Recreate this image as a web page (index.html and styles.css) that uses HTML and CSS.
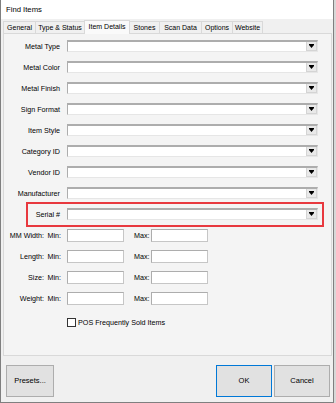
FILE: index.html
```html
<!DOCTYPE html>
<html lang="en">
<head>
  <meta charset="UTF-8" />
  <title>Find Items</title>
  <link rel="stylesheet" href="styles.css">
</head>
<body>
  <div class="window">
    <div class="titlebar">Find Items</div>
    <div class="tabs">
      <div class="tab t-general">General</div>
      <div class="tab t-type">Type &amp; Status</div>
      <div class="tab t-item active">Item Details</div>
      <div class="tab t-stones">Stones</div>
      <div class="tab t-scan">Scan Data</div>
      <div class="tab t-options">Options</div>
      <div class="tab t-web">Website</div>
    </div>
    <div class="panel">
      <div class="row">
        <div class="label">Metal Type</div>
        <div class="combo"><span class="drop"><svg viewBox="0 0 5 4" width="5" height="4"><rect x="0" y="0" width="5" height="1" fill="#000"/><polygon points="0,1 5,1 2.5,4" fill="#000"/></svg></span></div>
      </div>
      <div class="row">
        <div class="label">Metal Color</div>
        <div class="combo"><span class="drop"><svg viewBox="0 0 5 4" width="5" height="4"><rect x="0" y="0" width="5" height="1" fill="#000"/><polygon points="0,1 5,1 2.5,4" fill="#000"/></svg></span></div>
      </div>
      <div class="row">
        <div class="label">Metal Finish</div>
        <div class="combo"><span class="drop"><svg viewBox="0 0 5 4" width="5" height="4"><rect x="0" y="0" width="5" height="1" fill="#000"/><polygon points="0,1 5,1 2.5,4" fill="#000"/></svg></span></div>
      </div>
      <div class="row">
        <div class="label">Sign Format</div>
        <div class="combo"><span class="drop"><svg viewBox="0 0 5 4" width="5" height="4"><rect x="0" y="0" width="5" height="1" fill="#000"/><polygon points="0,1 5,1 2.5,4" fill="#000"/></svg></span></div>
      </div>
      <div class="row">
        <div class="label">Item Style</div>
        <div class="combo"><span class="drop"><svg viewBox="0 0 5 4" width="5" height="4"><rect x="0" y="0" width="5" height="1" fill="#000"/><polygon points="0,1 5,1 2.5,4" fill="#000"/></svg></span></div>
      </div>
      <div class="row">
        <div class="label">Category ID</div>
        <div class="combo"><span class="drop"><svg viewBox="0 0 5 4" width="5" height="4"><rect x="0" y="0" width="5" height="1" fill="#000"/><polygon points="0,1 5,1 2.5,4" fill="#000"/></svg></span></div>
      </div>
      <div class="row">
        <div class="label">Vendor ID</div>
        <div class="combo"><span class="drop"><svg viewBox="0 0 5 4" width="5" height="4"><rect x="0" y="0" width="5" height="1" fill="#000"/><polygon points="0,1 5,1 2.5,4" fill="#000"/></svg></span></div>
      </div>
      <div class="row">
        <div class="label">Manufacturer</div>
        <div class="combo"><span class="drop"><svg viewBox="0 0 5 4" width="5" height="4"><rect x="0" y="0" width="5" height="1" fill="#000"/><polygon points="0,1 5,1 2.5,4" fill="#000"/></svg></span></div>
      </div>
      <div class="row highlight">
        <div class="label">Serial #</div>
        <div class="combo"><span class="drop"><svg viewBox="0 0 5 4" width="5" height="4"><rect x="0" y="0" width="5" height="1" fill="#000"/><polygon points="0,1 5,1 2.5,4" fill="#000"/></svg></span></div>
      </div>
      <div class="row num-row">
        <div class="num-label">MM Width:</div>
        <div class="min">Min:</div>
        <div class="box"></div>
        <div class="max">Max:</div>
        <div class="box"></div>
      </div>
      <div class="row num-row">
        <div class="num-label">Length:</div>
        <div class="min">Min:</div>
        <div class="box"></div>
        <div class="max">Max:</div>
        <div class="box"></div>
      </div>
      <div class="row num-row">
        <div class="num-label">Size:</div>
        <div class="min">Min:</div>
        <div class="box"></div>
        <div class="max">Max:</div>
        <div class="box"></div>
      </div>
      <div class="row num-row">
        <div class="num-label">Weight:</div>
        <div class="min">Min:</div>
        <div class="box"></div>
        <div class="max">Max:</div>
        <div class="box"></div>
      </div>
      <div class="check-row">
        <span class="checkbox"></span>
        <span class="check-text">POS Frequently Sold Items</span>
      </div>
    </div>
    <div class="footer">
      <div class="btn presets">Presets...</div>
      <div class="spacer"></div>
      <div class="btn ok">OK</div>
      <div class="btn cancel">Cancel</div>
    </div>
  </div>
</body>
</html>
```

FILE: styles.css
```css
body {
  margin: 0;
  padding: 0;
  background: #d8d8d8;
  font-family: 'Liberation Sans', Arial, sans-serif;
  color: #000;
}
.window {
  width: 334px;
  height: 403px;
  box-sizing: border-box;
  border: 1px solid #7f7f7f;
  border-top: none;
  background: #f0f0f0;
  display: flex;
  flex-direction: column;
}
.titlebar {
  height: 19px;
  line-height: 20px;
  background: #fff;
  padding-left: 5px;
  font-size: 7.7px;
}
.tabs {
  display: flex;
  align-items: flex-end;
  height: 14px;
  margin-left: 2px;
  position: relative;
  z-index: 1;
}
.tab {
  box-sizing: border-box;
  height: 12px;
  line-height: 11px;
  border: 1px solid #d9d9d9;
  border-bottom: none;
  border-right: none;
  background: #f0f0f0;
  font-size: 7px;
  text-align: center;
  white-space: nowrap;
}
.tab.active {
  height: 14px;
  line-height: 12px;
  margin-bottom: -1px;
  background: #fafafa;
  border-right: 1px solid #d9d9d9;
}
.t-general { width: 32px; }
.t-type { width: 49px; }
.t-item { width: 46px; }
.t-stones { width: 29px; border-left: none; }
.t-scan { width: 42px; }
.t-options { width: 31px; }
.t-web { width: 31px; border-right: 1px solid #d9d9d9; }
.panel {
  box-sizing: border-box;
  height: 323px;
  margin: 0 1px 0 2px;
  border: 1px solid #d9d9d9;
  background: #f4f4f4;
  padding-top: 6px;
  display: flex;
  flex-direction: column;
  gap: 8px;
}
.row {
  display: flex;
  align-items: flex-start;
  height: 13px;
  font-size: 7.2px;
}
.label {
  width: 56px;
  text-align: right;
  line-height: 13px;
  margin-right: 7px;
  white-space: nowrap;
}
.combo {
  box-sizing: border-box;
  width: 251px;
  height: 12px;
  background: #fff;
  border-top: 2px solid #adadad;
  border-left: 1px solid #adadad;
  border-right: 1px solid #e6e6e6;
  border-bottom: 1px solid #e6e6e6;
  display: flex;
  justify-content: flex-end;
  align-items: stretch;
}
.drop {
  width: 9px;
  background: #e9e9e9;
  border: 1px solid #d4d4d4;
  border-top: none;
  display: flex;
  align-items: center;
  justify-content: center;
}
.drop svg {
  display: block;
}
.highlight {
  position: relative;
}
.highlight::after {
  content: "";
  position: absolute;
  left: 22px;
  top: -6px;
  width: 298px;
  height: 25px;
  box-sizing: border-box;
  border: 2px solid #e8393f;
}
.num-row {
  line-height: 13px;
}
.num-label {
  width: 40px;
  text-align: right;
  white-space: nowrap;
}
.min {
  width: 17px;
  text-align: right;
  margin-right: 6px;
}
.max {
  width: 17px;
  margin-left: 10px;
}
.box {
  box-sizing: border-box;
  width: 57px;
  height: 13px;
  background: #fff;
  border: 1px solid #adadad;
  border-right-color: #c6c6c6;
  border-bottom-color: #c6c6c6;
}
.check-row {
  display: flex;
  align-items: center;
  margin-top: 5px;
  padding-left: 63px;
  font-size: 7.2px;
}
.checkbox {
  box-sizing: border-box;
  width: 9px;
  height: 9px;
  background: #fff;
  border: 1px solid #333;
  margin-right: 2px;
}
.footer {
  display: flex;
  align-items: flex-start;
  padding: 9px 3px 0 5px;
}
.spacer {
  flex: 1;
}
.btn {
  box-sizing: border-box;
  height: 32px;
  line-height: 30px;
  text-align: center;
  font-size: 7.5px;
  background: #e1e1e1;
  border: 1px solid #adadad;
}
.presets { width: 48px; }
.ok {
  width: 56px;
  border: 1px solid #0078d7;
  margin-right: 2px;
}
.cancel { width: 56px; }
```
